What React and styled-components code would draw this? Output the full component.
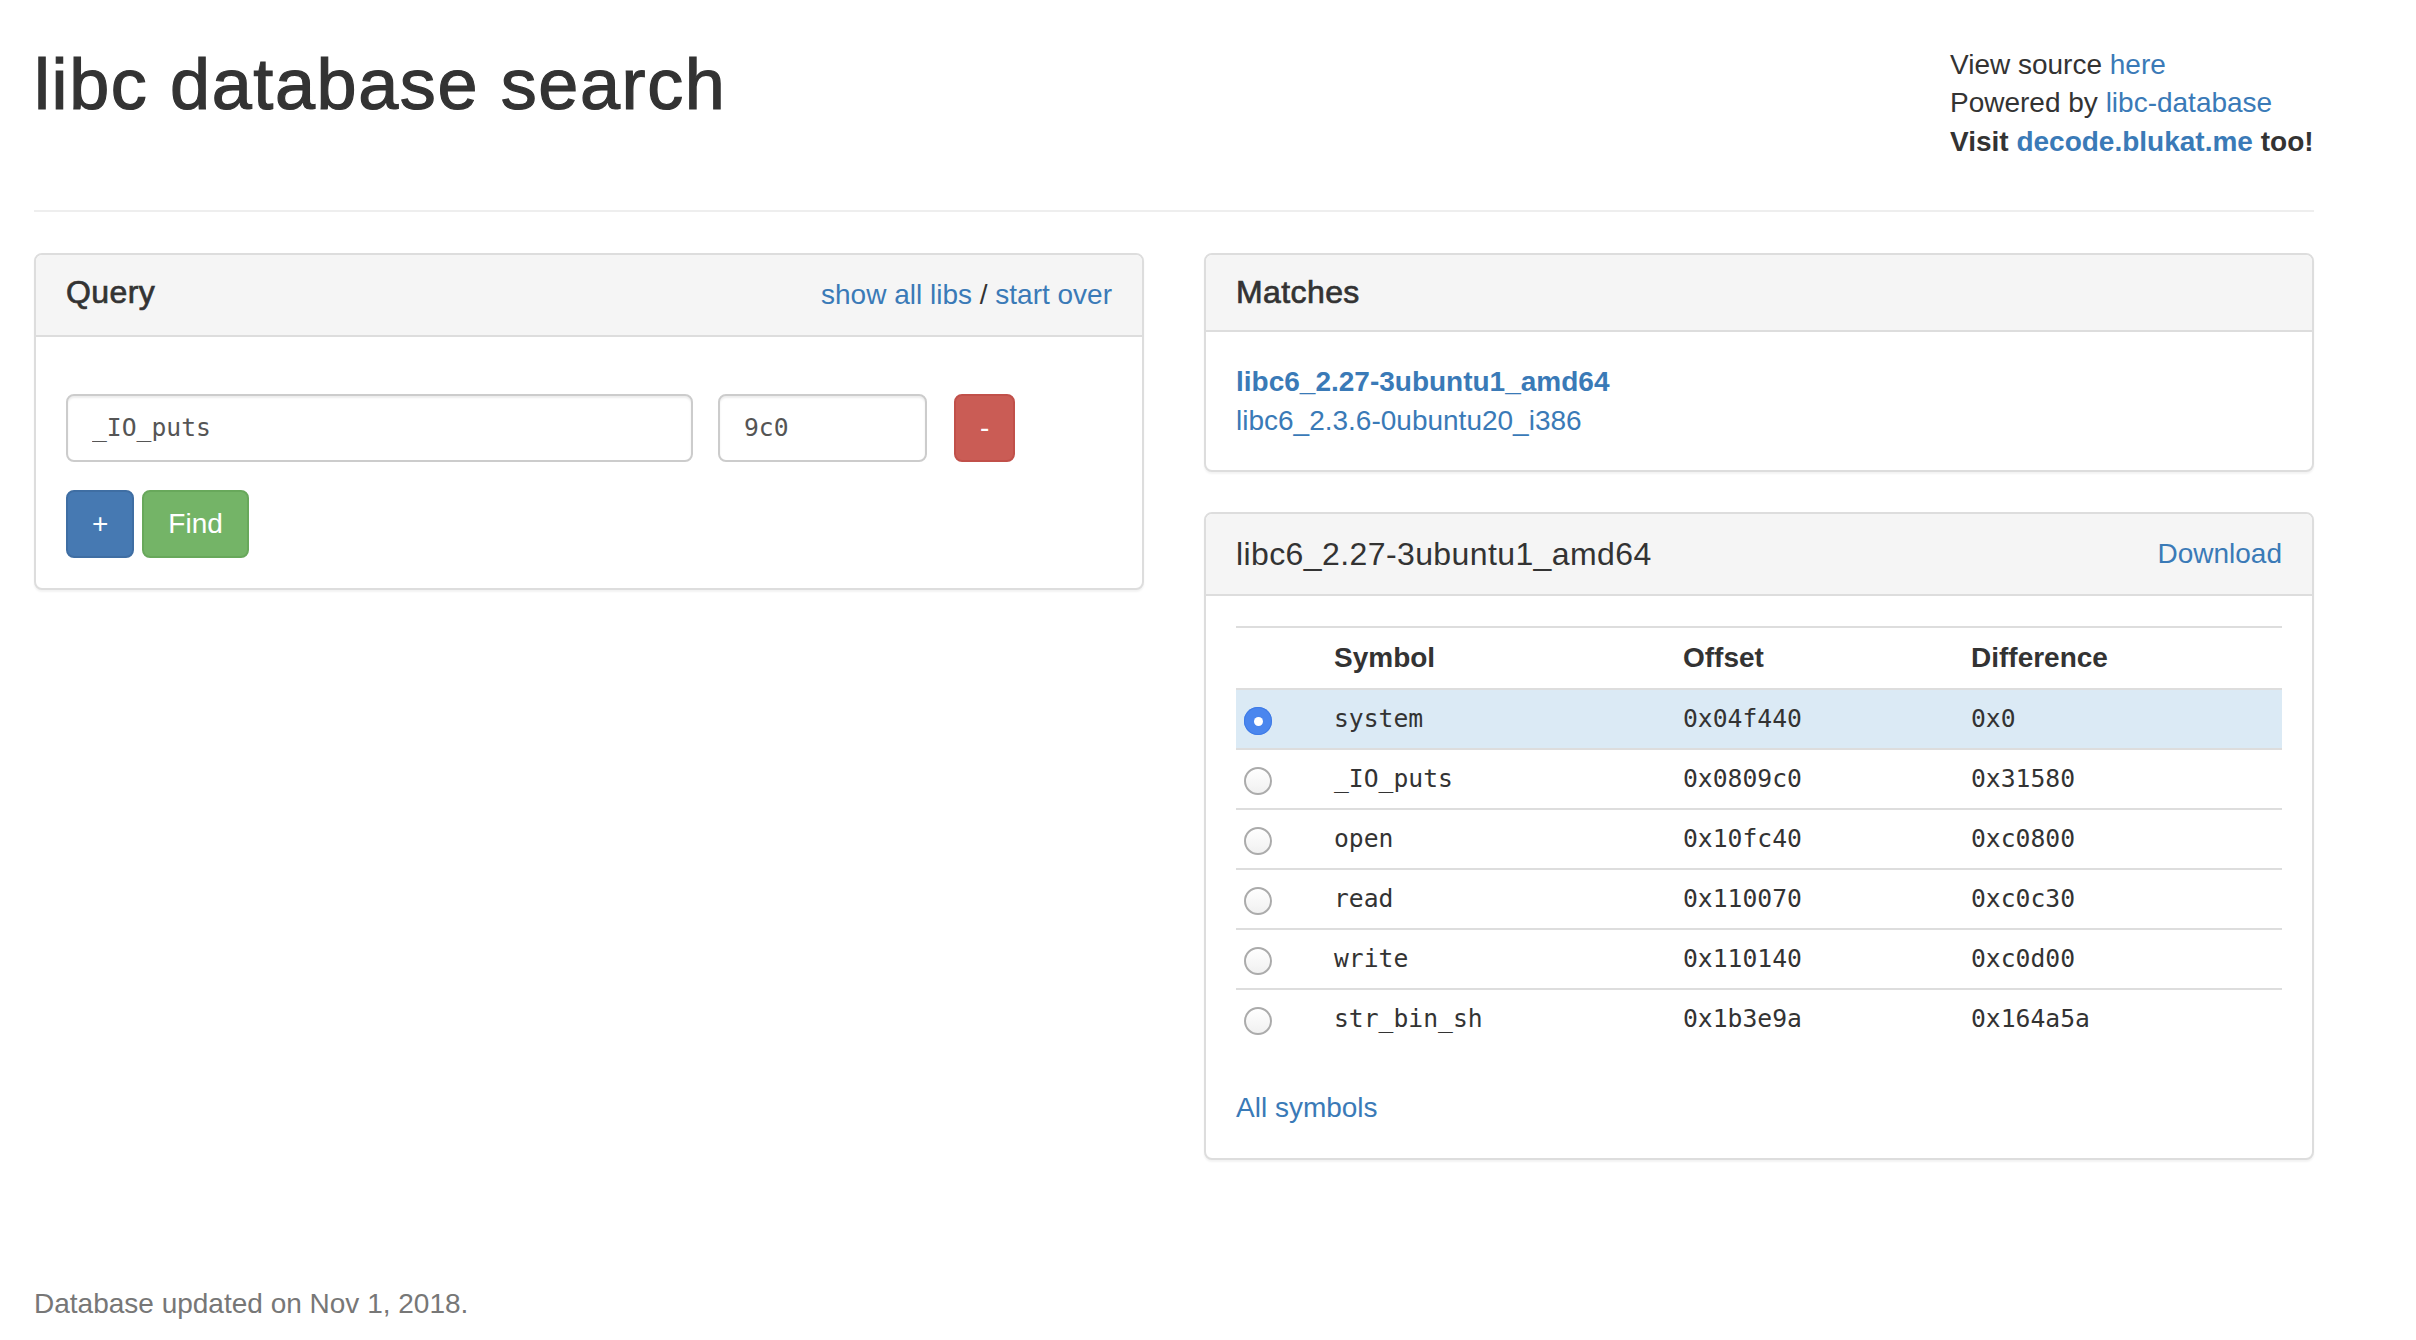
import React from "react";
import styled, { createGlobalStyle, css } from "styled-components";

const GlobalStyle = createGlobalStyle`
  html, body { margin: 0; padding: 0; background: #fff; }
  body {
    font-family: "Liberation Sans", Helvetica, Arial, sans-serif;
    font-size: 28px;
    line-height: 40px;
    color: #333;
  }
  * { box-sizing: border-box; }
`;

const Container = styled.div`
  width: 2280px;
  margin-left: 34px;
`;

const Header = styled.header`
  display: flex;
  justify-content: space-between;
  align-items: flex-start;
  padding-top: 45px;
`;

const Title = styled.h1`
  margin: 0;
  font-size: 72px;
  line-height: 1.1;
  font-weight: 400;
  letter-spacing: 1.6px;
  color: #333;
  -webkit-text-stroke: 1.2px #333;
`;

const Info = styled.div`
  width: 364px;
  margin-top: 1px;
  line-height: 38.3px;
`;

const InfoLine = styled.div`
  font-weight: ${(p) => (p.$bold ? 700 : 400)};
  white-space: nowrap;
`;

const Link = styled.a`
  color: #3a7ab7;
  text-decoration: none;
  font-weight: ${(p) => (p.$bold ? 700 : "inherit")};
`;

const Rule = styled.hr`
  margin: 49px 0 41px;
  border: 0;
  border-top: 2px solid #eee;
  height: 0;
`;

const Columns = styled.div`
  display: grid;
  grid-template-columns: 1110px 1110px;
  column-gap: 60px;
  align-items: start;
`;

const Column = styled.div`
  display: flex;
  flex-direction: column;
`;

const Panel = styled.section`
  border: 2px solid #ddd;
  border-radius: 8px;
  background: #fff;
  box-shadow: 0 2px 2px rgba(0, 0, 0, 0.05);
  margin-bottom: 40px;
`;

const PanelHeading = styled.div`
  display: flex;
  justify-content: space-between;
  align-items: flex-start;
  padding: 20px 30px;
  background: #f5f5f5;
  border-bottom: 2px solid #ddd;
  border-radius: 6px 6px 0 0;
`;

const PanelTitle = styled.h3`
  margin: 0;
  font-size: 32px;
  line-height: ${(p) => (p.$medium ? 1.1 : "40px")};
  font-weight: 400;
  color: #333;
  letter-spacing: 0.4px;
  ${(p) =>
    p.$medium &&
    css`
      -webkit-text-stroke: 0.7px #333;
    `}
`;

const HeadingLinks = styled.div`
  line-height: 40px;
  white-space: nowrap;
`;

const PanelBody = styled.div`
  padding: 30px;
`;

const InputRow = styled.div`
  display: flex;
  align-items: center;
  margin-top: 27px;
`;

const TextInput = styled.input`
  width: ${(p) => p.$width}px;
  height: 68px;
  margin-right: ${(p) => p.$gap}px;
  padding: 0 24px;
  border: 2px solid #ccc;
  border-radius: 8px;
  box-shadow: inset 0 2px 2px rgba(0, 0, 0, 0.075);
  font-family: "DejaVu Sans Mono", Menlo, monospace;
  font-size: 24.7px;
  color: #555;
  background: #fff;
  outline: none;
`;

const variants = {
  primary: css`
    background: #4679b2;
    border-color: #3f6ea3;
  `,
  success: css`
    background: #74b467;
    border-color: #68a85b;
  `,
  danger: css`
    background: #ca5c55;
    border-color: #c1504a;
  `,
};

const Button = styled.button`
  height: 68px;
  padding: 0 24px;
  border: 2px solid transparent;
  border-radius: 8px;
  font-family: "Liberation Sans", Helvetica, Arial, sans-serif;
  font-size: 28px;
  line-height: 40px;
  color: #fff;
  cursor: pointer;
  ${(p) => variants[p.$variant]}
`;

const ButtonRow = styled.div`
  display: flex;
  gap: 8px;
  margin-top: 28px;
`;

const MatchList = styled.div`
  display: flex;
  flex-direction: column;
  line-height: 39px;
`;

const Table = styled.table`
  width: 100%;
  border-collapse: separate;
  border-spacing: 0;
  table-layout: fixed;
  margin-bottom: 40px;
`;

const Th = styled.th`
  text-align: left;
  font-weight: 700;
  padding: 10px 8px;
  line-height: 40px;
  border-top: 2px solid #ddd;
`;

const Tr = styled.tr`
  background: ${(p) => (p.$active ? "#dbeaf5" : "transparent")};
`;

const Td = styled.td`
  padding: 9px 8px;
  line-height: 40px;
  vertical-align: middle;
  border-top: 2px solid #ddd;
  font-family: ${(p) =>
    p.$mono ? '"DejaVu Sans Mono", Menlo, monospace' : "inherit"};
  font-size: ${(p) => (p.$mono ? "24.7px" : "inherit")};
  color: #333;
`;

const Radio = styled.span`
  display: flex;
  align-items: center;
  justify-content: center;
  width: 28px;
  height: 28px;
  margin-top: 4px;
  border-radius: 50%;
  ${(p) =>
    p.$checked
      ? css`
          background: #4a86ee;
          box-shadow: inset 0 0 0 1px #3f7be6;
          &::after {
            content: "";
            width: 9px;
            height: 9px;
            border-radius: 50%;
            background: #fff;
          }
        `
      : css`
          background: linear-gradient(#ffffff, #f0f0f0);
          border: 2px solid #ababab;
        `}
`;

const Footer = styled.footer`
  margin-top: 84px;
  color: #777;
  line-height: 40px;
`;

const rows = [
  { sym: "system", off: "0x04f440", diff: "0x0", sel: true },
  { sym: "_IO_puts", off: "0x0809c0", diff: "0x31580" },
  { sym: "open", off: "0x10fc40", diff: "0xc0800" },
  { sym: "read", off: "0x110070", diff: "0xc0c30" },
  { sym: "write", off: "0x110140", diff: "0xc0d00" },
  { sym: "str_bin_sh", off: "0x1b3e9a", diff: "0x164a5a" },
];

export default function App() {
  return (
    <>
      <GlobalStyle />
      <Container>
        <Header>
          <Title>libc database search</Title>
          <Info>
            <InfoLine>
              View source <Link href="#">here</Link>
            </InfoLine>
            <InfoLine>
              Powered by <Link href="#">libc-database</Link>
            </InfoLine>
            <InfoLine $bold>
              Visit <Link href="#">decode.blukat.me</Link> too!
            </InfoLine>
          </Info>
        </Header>
        <Rule />
        <Columns>
          <Column>
            <Panel>
              <PanelHeading>
                <PanelTitle $medium>Query</PanelTitle>
                <HeadingLinks>
                  <Link href="#">show all libs</Link> /{" "}
                  <Link href="#">start over</Link>
                </HeadingLinks>
              </PanelHeading>
              <PanelBody>
                <InputRow>
                  <TextInput $width={627} $gap={25} value="_IO_puts" readOnly />
                  <TextInput $width={209} $gap={27} value="9c0" readOnly />
                  <Button $variant="danger">-</Button>
                </InputRow>
                <ButtonRow>
                  <Button $variant="primary">+</Button>
                  <Button $variant="success">Find</Button>
                </ButtonRow>
              </PanelBody>
            </Panel>
          </Column>
          <Column>
            <Panel>
              <PanelHeading>
                <PanelTitle $medium>Matches</PanelTitle>
              </PanelHeading>
              <PanelBody>
                <MatchList>
                  <Link href="#" $bold>
                    libc6_2.27-3ubuntu1_amd64
                  </Link>
                  <Link href="#">libc6_2.3.6-0ubuntu20_i386</Link>
                </MatchList>
              </PanelBody>
            </Panel>
            <Panel>
              <PanelHeading>
                <PanelTitle>libc6_2.27-3ubuntu1_amd64</PanelTitle>
                <HeadingLinks>
                  <Link href="#">Download</Link>
                </HeadingLinks>
              </PanelHeading>
              <PanelBody>
                <Table>
                  <colgroup>
                    <col style={{ width: 90 }} />
                    <col style={{ width: 349 }} />
                    <col style={{ width: 288 }} />
                    <col />
                  </colgroup>
                  <thead>
                    <tr>
                      <Th />
                      <Th>Symbol</Th>
                      <Th>Offset</Th>
                      <Th>Difference</Th>
                    </tr>
                  </thead>
                  <tbody>
                    {rows.map((r) => (
                      <Tr key={r.sym} $active={r.sel}>
                        <Td>
                          <Radio $checked={r.sel} />
                        </Td>
                        <Td $mono>{r.sym}</Td>
                        <Td $mono>{r.off}</Td>
                        <Td $mono>{r.diff}</Td>
                      </Tr>
                    ))}
                  </tbody>
                </Table>
                <Link href="#">All symbols</Link>
              </PanelBody>
            </Panel>
          </Column>
        </Columns>
        <Footer>Database updated on Nov 1, 2018.</Footer>
      </Container>
    </>
  );
}
